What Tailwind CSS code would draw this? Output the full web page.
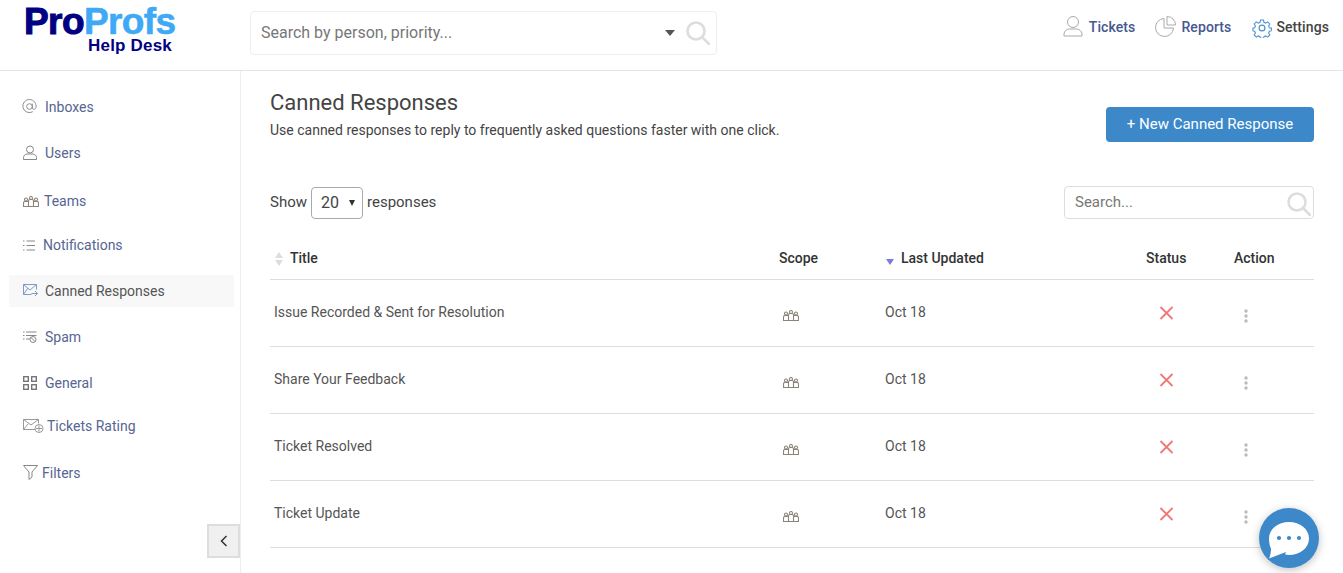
<!DOCTYPE html>
<html lang="en">
  <head>
    <meta charset="UTF-8" />
    <meta name="viewport" content="width=device-width, initial-scale=1.0" />
    <title>Canned Responses</title>
    <script src="https://cdn.jsdelivr.net/npm/@tailwindcss/browser@4"></script>
  </head>
  <body class="bg-white h-screen overflow-hidden font-[Roboto,sans-serif] text-[#444]">
    <!-- Header -->
    <header class="h-[71px] border-b border-[#e5e5e5] flex items-start relative">
      <div class="w-[250px] shrink-0 pl-[24px] pt-[5px] font-['Liberation_Sans',sans-serif] font-bold">
        <div class="text-[37px] leading-[33px] tracking-[-0.6px]">
          <span class="text-[#000080] [-webkit-text-stroke:1px_#000080]">Pro</span><span class="text-[#3fa9f5] [-webkit-text-stroke:0.6px_#3fa9f5]">Profs</span>
        </div>
        <div class="text-[17px] leading-[16px] text-[#000080] pl-[64px] tracking-[0.2px]">Help Desk</div>
      </div>
      <div class="mt-[11px] w-[467px] h-[44px] border border-[#eee] rounded flex items-center pl-[10px] pr-[6px]">
        <span class="flex-1 text-[16px] text-[#777]">Search by person, priority...</span>
        <span class="w-0 h-0 border-x-[5px] border-x-transparent border-t-[6px] border-t-[#555] mr-[11px]"></span>
        <svg class="w-[24px] h-[24px]" viewBox="0 0 24 24" fill="none" stroke="#ddd" stroke-width="2.600"><circle cx="10" cy="10" r="8.500"/><path d="M16 16l7 7" stroke-linecap="round"/></svg>
      </div>
      <nav class="ml-auto mr-[14px] pt-[17px] flex items-center text-[14px] font-medium tracking-[0.1px]">
        <svg class="w-[20px] h-[22px] mr-[6px] -mt-[4px]" viewBox="0 0 20 22" fill="none" stroke="#aaa" stroke-width="1"><circle cx="10" cy="7" r="5.500"/><path d="M1 21v-2c0-3 3-5 5.500-5h7c2.500 0 5.500 2 5.500 5v2z"/></svg>
        <span class="text-[#46588f] mr-[20px]">Tickets</span>
        <svg class="w-[21px] h-[21px] mr-[5px] -mt-[2px]" viewBox="0 0 21 21" fill="none" stroke="#aaa" stroke-width="1"><path d="M9 2.500a9 9 0 1 0 9.500 9.500H9z"/><path d="M12 .5a8.500 8.500 0 0 1 8.500 8.500H12z"/></svg>
        <span class="text-[#46588f] mr-[21px]">Reports</span>
        <svg class="w-[20px] h-[20px] mr-[4px] mt-[1px]" viewBox="0 0 24 24" fill="none" stroke="#4a90d0" stroke-width="1.400"><circle cx="12" cy="12" r="3.500"/><path d="M10 1.500h4l.6 3 2.300 1 2.600-1.600 2.800 2.800-1.600 2.600 1 2.300 3 .6-.7 3.600-2.300.5-1 2.300 1.600 2.600-2.800 2.800-2.600-1.600-2.300 1-.6 2.300h-4l-.6-2.300-2.300-1-2.600 1.600-2.800-2.800 1.600-2.600-1-2.300-2.300-.5v-3.600l2.300-.6 1-2.300-1.600-2.600 2.800-2.800 2.600 1.600 2.300-1z" transform="translate(1.100 1.100) scale(.91)"/></svg>
        <span class="text-[#444]">Settings</span>
      </nav>
    </header>

    <div class="flex h-[502px]">
      <!-- Sidebar -->
      <aside class="w-[241px] shrink-0 border-r border-[#eee] relative pt-5 pl-[9px] pr-[6px] text-[14px] text-[#566591]">
        <a class="h-8 flex items-center pl-[13px] gap-[8px]">
          <svg class="w-[15px] h-[15px] -mt-[2px]" viewBox="0 0 16 16" fill="none" stroke="#888" stroke-width="1"><circle cx="8" cy="8" r="3"/><path d="M11 5v4.500c0 2 3.500 2 4-.5.600-4-2.500-8.500-7-8.500a7 7 0 1 0 3.500 13"/></svg>
          <span>Inboxes</span>
        </a>
        <a class="h-8 mt-[14px] flex items-center pl-[14px] gap-[8px]">
          <svg class="w-[14px] h-[15px] -mt-[2px]" viewBox="0 0 14 15" fill="none" stroke="#888" stroke-width="1"><circle cx="7" cy="4.500" r="3.500"/><path d="M.5 14.500v-2c0-2 2-3.500 3.500-3.500h6c1.500 0 3.500 1.500 3.500 3.500v2z"/></svg>
          <span>Users</span>
        </a>
        <a class="h-8 mt-[16px] flex items-center pl-[14px] gap-[5px]">
          <svg class="w-[16px] h-[11px]" viewBox="0 0 16 11" fill="none" stroke="#8a8478" stroke-width="1.100"><circle cx="3" cy="3.500" r="1.500"/><circle cx="8" cy="2" r="1.500"/><circle cx="13" cy="3.500" r="1.500"/><path d="M.5 10.500V7q0-1.500 1.500-1.500h3.500V5q0-1.500 1.500-1.500h2q1.500 0 1.500 1.500v.5H14q1.500 0 1.500 1.500v3.500zM5.500 5.500v5M10.500 5.500v5"/></svg>
          <span>Teams</span>
        </a>
        <a class="h-8 mt-[12px] flex items-center pl-[14px] gap-[8px]">
          <svg class="w-[12px] h-[11px]" viewBox="0 0 12 11" fill="none" stroke="#888" stroke-width="1"><path d="M0 1h1.500M0 5.500h1.500M0 10h1.500M3.500 1H12M3.500 5.500H12M3.500 10H12"/></svg>
          <span>Notifications</span>
        </a>
        <a class="h-8 mt-[14px] flex items-center pl-[14px] gap-[7px] bg-[#f8f8f8] text-[#555]">
          <svg class="w-[15px] h-[12px] -mt-[2px]" viewBox="0 0 15 12" fill="none" stroke="#7f9cc0" stroke-width="1"><path d="M13.500 5.500V.5H.5v10h8"/><path d="M.5.5l6.500 5.500 6.500-5.500M.5 10.500l4.500-6.500M8.500 9.500h6M12 7l2.500 2.500L12 12"/></svg>
          <span>Canned Responses</span>
        </a>
        <a class="h-8 mt-[14px] flex items-center pl-[14px] gap-[8px]">
          <svg class="w-[14px] h-[12px]" viewBox="0 0 14 12" fill="none" stroke="#888" stroke-width="1"><path d="M0 1h1.500M0 4.500h1.500M0 8h1.500M3 1h10.500M3 4.500h10.500M3 8h4"/><circle cx="10" cy="8.500" r="3"/><path d="M8 6.500l4 4"/></svg>
          <span>Spam</span>
        </a>
        <a class="h-8 mt-[14px] flex items-center pl-[14px] gap-[8px]">
          <svg class="w-[14px] h-[14px]" viewBox="0 0 14 14" fill="none" stroke="#777" stroke-width="1.400"><rect x=".7" y=".7" width="4.600" height="4.600"/><rect x="8.700" y=".7" width="4.600" height="4.600"/><rect x=".7" y="8.700" width="4.600" height="4.600"/><rect x="8.700" y="8.700" width="4.600" height="4.600"/></svg>
          <span>General</span>
        </a>
        <a class="h-8 mt-[11px] flex items-center pl-[14px] gap-[3px]">
          <svg class="w-[21px] h-[14px]" viewBox="0 0 21 14" fill="none" stroke="#999" stroke-width="1"><path d="M12 10.500H.5V.5h15v4"/><path d="M.5.500l7.500 5.500 7.500-5.500M.5 10.500l5-6"/><circle cx="16" cy="9.500" r="4"/><path d="M16 6.500v6M13 9.500h6"/></svg>
          <span>Tickets Rating</span>
        </a>
        <a class="h-8 mt-[15px] flex items-center pl-[14px] gap-[4px]">
          <svg class="w-[15px] h-[15px] -mt-[2px]" viewBox="0 0 15 15" fill="none" stroke="#888" stroke-width="1"><path d="M.5.500h14L9 7v5l-3 2.500V7z"/></svg>
          <span>Filters</span>
        </a>
        <button class="absolute right-0 top-[453px] w-[33px] h-[34px] bg-[#f0f0f0] border-2 border-[#ddd] flex items-center justify-center">
          <svg class="w-[8px] h-[12px]" viewBox="0 0 8 12" fill="none" stroke="#333" stroke-width="1.500"><path d="M6.500 1L1.500 6l5 5"/></svg>
        </button>
      </aside>

      <!-- Main -->
      <main class="flex-1 pl-[29px] pr-[29px]">
        <div class="flex items-start justify-between pt-[19px] h-[115px]">
          <div>
            <h1 class="text-[22px] leading-[26px] text-[#444]">Canned Responses</h1>
            <p class="text-[14px] leading-[20px] mt-[4px] text-[#444]">Use canned responses to reply to frequently asked questions faster with one click.</p>
          </div>
          <button class="mt-[17px] w-[208px] h-[35px] rounded-sm bg-[#3d88c9] text-white text-[15px]">+ New Canned Response</button>
        </div>

        <div class="flex items-center justify-between h-[33px] text-[15px]">
          <div class="flex items-center gap-[4px]">
            <span>Show</span>
            <div class="w-[52px] h-[32px] border border-[#aaa] rounded-sm flex items-center justify-between pl-[9px] pr-[7px] text-[16px]">
              <span>20</span>
              <span class="w-0 h-0 border-x-[3px] border-x-transparent border-t-[6px] border-t-[#333]"></span>
            </div>
            <span>responses</span>
          </div>
          <div class="w-[250px] h-[33px] border border-[#ddd] rounded-sm flex items-center pl-[10px] pr-[2px]">
            <span class="flex-1 text-[#777]">Search...</span>
            <svg class="w-[24px] h-[24px] mt-[2px]" viewBox="0 0 24 24" fill="none" stroke="#ddd" stroke-width="2.600"><circle cx="10" cy="10" r="8.500"/><path d="M16 16l7 7" stroke-linecap="round"/></svg>
          </div>
        </div>

        <table class="table-fixed w-[1044px] mt-[21px] text-[14px] text-left">
          <colgroup>
            <col class="w-[509px]" /><col class="w-[106px]" /><col class="w-[261px]" /><col class="w-[88px]" /><col class="w-[80px]" />
          </colgroup>
          <thead>
            <tr class="h-[39px] border-b border-[#ddd] text-[#333]">
              <th class="font-medium pl-[5px] pb-[2px]">
                <span class="flex items-center gap-[7px]">
                  <span class="flex flex-col gap-[2px] mt-[2px]">
                    <span class="w-0 h-0 border-x-[4px] border-x-transparent border-b-[6px] border-b-[#ddd]"></span>
                    <span class="w-0 h-0 border-x-[4px] border-x-transparent border-t-[6px] border-t-[#ddd]"></span>
                  </span>Title
                </span>
              </th>
              <th class="font-medium pb-[2px]">Scope</th>
              <th class="font-medium pb-[2px]">
                <span class="flex items-center gap-[7px] pl-[1px]">
                  <span class="w-0 h-0 mt-[8px] border-x-[4px] border-x-transparent border-t-[6px] border-t-[#7b7bdc]"></span>Last Updated
                </span>
              </th>
              <th class="font-medium pb-[2px]">Status</th>
              <th class="font-medium pb-[2px]">Action</th>
            </tr>
          </thead>
          <tbody class="text-[#555]">
            <tr class="h-[67px] border-b border-[#ddd]">
              <td class="pl-[4px]">Issue Recorded &amp; Sent for Resolution</td>
              <td class="pl-[4px]"><svg class="w-[16px] h-[11px] mt-[6px]" viewBox="0 0 16 11" fill="none" stroke="#8a8478" stroke-width="1.100"><circle cx="3" cy="3.500" r="1.500"/><circle cx="8" cy="2" r="1.500"/><circle cx="13" cy="3.500" r="1.500"/><path d="M.5 10.500V7q0-1.500 1.500-1.500h3.500V5q0-1.500 1.500-1.500h2q1.500 0 1.500 1.500v.5H14q1.500 0 1.500 1.500v3.500zM5.500 5.500v5M10.500 5.500v5"/></svg></td>
              <td>Oct 18</td>
              <td class="pl-[13px]"><svg class="w-[15px] h-[14px]" viewBox="0 0 15 14" stroke="#ee7777" stroke-width="1.800"><path d="M1.500 1l12 12M13.500 1l-12 12"/></svg></td>
              <td class="pl-[10px]"><svg class="w-[4px] h-[14px] mt-[6px]" viewBox="0 0 4 14" fill="#bbb"><circle cx="2" cy="2" r="1.700"/><circle cx="2" cy="7" r="1.700"/><circle cx="2" cy="12" r="1.700"/></svg></td>
            </tr>
            <tr class="h-[67px] border-b border-[#ddd]">
              <td class="pl-[4px]">Share Your Feedback</td>
              <td class="pl-[4px]"><svg class="w-[16px] h-[11px] mt-[6px]" viewBox="0 0 16 11" fill="none" stroke="#8a8478" stroke-width="1.100"><circle cx="3" cy="3.500" r="1.500"/><circle cx="8" cy="2" r="1.500"/><circle cx="13" cy="3.500" r="1.500"/><path d="M.5 10.500V7q0-1.500 1.500-1.500h3.500V5q0-1.500 1.500-1.500h2q1.500 0 1.500 1.500v.5H14q1.500 0 1.500 1.500v3.500zM5.500 5.500v5M10.500 5.500v5"/></svg></td>
              <td>Oct 18</td>
              <td class="pl-[13px]"><svg class="w-[15px] h-[14px]" viewBox="0 0 15 14" stroke="#ee7777" stroke-width="1.800"><path d="M1.500 1l12 12M13.500 1l-12 12"/></svg></td>
              <td class="pl-[10px]"><svg class="w-[4px] h-[14px] mt-[6px]" viewBox="0 0 4 14" fill="#bbb"><circle cx="2" cy="2" r="1.700"/><circle cx="2" cy="7" r="1.700"/><circle cx="2" cy="12" r="1.700"/></svg></td>
            </tr>
            <tr class="h-[67px] border-b border-[#ddd]">
              <td class="pl-[4px]">Ticket Resolved</td>
              <td class="pl-[4px]"><svg class="w-[16px] h-[11px] mt-[6px]" viewBox="0 0 16 11" fill="none" stroke="#8a8478" stroke-width="1.100"><circle cx="3" cy="3.500" r="1.500"/><circle cx="8" cy="2" r="1.500"/><circle cx="13" cy="3.500" r="1.500"/><path d="M.5 10.500V7q0-1.500 1.500-1.500h3.500V5q0-1.500 1.500-1.500h2q1.500 0 1.500 1.500v.5H14q1.500 0 1.500 1.500v3.500zM5.500 5.500v5M10.500 5.500v5"/></svg></td>
              <td>Oct 18</td>
              <td class="pl-[13px]"><svg class="w-[15px] h-[14px]" viewBox="0 0 15 14" stroke="#ee7777" stroke-width="1.800"><path d="M1.500 1l12 12M13.500 1l-12 12"/></svg></td>
              <td class="pl-[10px]"><svg class="w-[4px] h-[14px] mt-[6px]" viewBox="0 0 4 14" fill="#bbb"><circle cx="2" cy="2" r="1.700"/><circle cx="2" cy="7" r="1.700"/><circle cx="2" cy="12" r="1.700"/></svg></td>
            </tr>
            <tr class="h-[67px] border-b border-[#ddd]">
              <td class="pl-[4px]">Ticket Update</td>
              <td class="pl-[4px]"><svg class="w-[16px] h-[11px] mt-[6px]" viewBox="0 0 16 11" fill="none" stroke="#8a8478" stroke-width="1.100"><circle cx="3" cy="3.500" r="1.500"/><circle cx="8" cy="2" r="1.500"/><circle cx="13" cy="3.500" r="1.500"/><path d="M.5 10.500V7q0-1.500 1.500-1.500h3.500V5q0-1.500 1.500-1.500h2q1.500 0 1.500 1.500v.5H14q1.500 0 1.500 1.500v3.500zM5.500 5.500v5M10.500 5.500v5"/></svg></td>
              <td>Oct 18</td>
              <td class="pl-[13px]"><svg class="w-[15px] h-[14px]" viewBox="0 0 15 14" stroke="#ee7777" stroke-width="1.800"><path d="M1.500 1l12 12M13.500 1l-12 12"/></svg></td>
              <td class="pl-[10px]"><svg class="w-[4px] h-[14px] mt-[6px]" viewBox="0 0 4 14" fill="#bbb"><circle cx="2" cy="2" r="1.700"/><circle cx="2" cy="7" r="1.700"/><circle cx="2" cy="12" r="1.700"/></svg></td>
            </tr>
          </tbody>
        </table>
      </main>
    </div>

    <!-- Chat widget -->
    <button class="fixed left-[1259px] top-[508px] w-[60px] h-[60px] rounded-full bg-[#3d88c9] shadow-[0_2px_8px_rgba(0,0,0,0.25)] flex items-center justify-center">
      <svg class="w-[40px] h-[37px] mt-[5px]" viewBox="0 0 40 37">
        <path fill="#fff" d="M20 0c11 0 20 7 20 16.500S31 33 20 33c-1.500 0-2.800-.1-4-.4L17 30 0 36.500c1.200-2.500 2-6 2-10C.7 24 0 20 0 16.500 0 7 9 0 20 0z"/>
        <circle cx="10" cy="16" r="2.100" fill="#3d88c9"/><circle cx="20" cy="16" r="2.100" fill="#3d88c9"/><circle cx="30" cy="16" r="2.100" fill="#3d88c9"/>
      </svg>
    </button>
  </body>
</html>
